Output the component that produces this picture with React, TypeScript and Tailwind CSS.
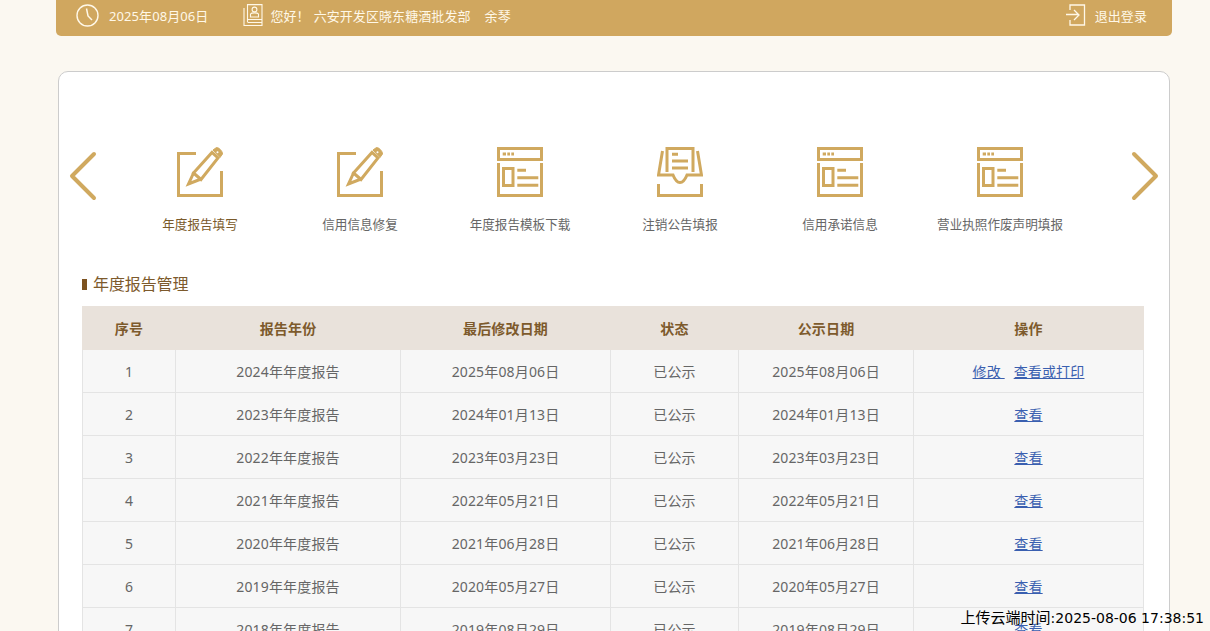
const FONT = "font-['Noto_Sans','Noto_Sans_CJK_SC',sans-serif]";

const EditIcon = () => (
  <svg width="46" height="50" viewBox="0 0 46 50" fill="none" stroke="#d0a95f" strokeWidth="3">
    <path d="M19 6.500H1.500V48.500H44.500V24" />
    <path d="M16.500 26L35 5.500L41 11L24 32.500Z" />
    <path d="M17 25L11.500 37L24 32" />
    <path d="M36 3L39.500 0.500C42 0.500 45.500 4 45.500 7L43 10.500Z" fill="#d0a95f" strokeWidth="1" />
    <circle cx="40.500" cy="5.200" r="1" fill="#ffffff" stroke="none" />
  </svg>
);

const NewsIcon = () => (
  <svg width="46" height="50" viewBox="0 0 46 50" fill="none" stroke="#d0a95f" strokeWidth="3">
    <rect x="1.500" y="1.500" width="43" height="11" />
    <path d="M1.500 16V48.500H44.500V16" />
    <path d="M5.700 6.900H9M10.300 6.900H13M14.300 6.900H17" />
    <rect x="6.500" y="21.500" width="9.500" height="17" />
    <path d="M20.300 23.300H29M20.300 30.700H41.300M20.300 38.300H41.300" />
  </svg>
);

const TrayIcon = () => (
  <svg width="46" height="50" viewBox="0 0 46 50" fill="none" stroke="#d0a95f" strokeWidth="3">
    <path d="M10 25V1.500H36V25" />
    <path d="M15 7.300H21M15 14H31M15 21H31" />
    <path d="M5.500 4L1.500 28H16C18 33 20 35.500 23 35.500C26 35.500 28 33 30 28H44.500L40.500 4" />
    <path d="M1.500 37V48.500H44.500V37" />
  </svg>
);

const ClockIcon = () => (
  <svg width="23" height="23" viewBox="0 0 23 23" fill="none" stroke="#fff8e8" strokeWidth="1.400">
    <circle cx="11.500" cy="11.500" r="10.500" />
    <path d="M10.500 4.500L12 12L16 16" strokeWidth="1.500" />
  </svg>
);

const ContactIcon = () => (
  <svg width="20" height="22" viewBox="0 0 20 22" fill="none" stroke="#fff8e8" strokeWidth="1.100">
    <path d="M4.500 18V0.600H19V18" />
    <path d="M1 4V21.500H19V18" />
    <circle cx="11.500" cy="5.500" r="2.400" />
    <path d="M7.500 13V10C8.500 8.500 14.500 8.500 15.500 10V13Z" />
    <path d="M4.500 15.500H19M4.500 18.500H19" />
  </svg>
);

const LogoutIcon = () => (
  <svg width="20" height="22" viewBox="0 0 20 22" fill="none" stroke="#fff8e8" strokeWidth="1.300">
    <path d="M4 6V1H18.500V21H4V16" />
    <path d="M0 10.500H12M8 6L13 11L8 16" />
  </svg>
);

const items = [
  { label: "年度报告填写", icon: <EditIcon />, color: "text-[#7a5a2a]" },
  { label: "信用信息修复", icon: <EditIcon />, color: "text-[#666666]" },
  { label: "年度报告模板下载", icon: <NewsIcon />, color: "text-[#666666]" },
  { label: "注销公告填报", icon: <TrayIcon />, color: "text-[#666666]" },
  { label: "信用承诺信息", icon: <NewsIcon />, color: "text-[#666666]" },
  { label: "营业执照作废声明填报", icon: <NewsIcon />, color: "text-[#666666]" },
];

const rows = [
  ["1", "2024年年度报告", "2025年08月06日", "2025年08月06日"],
  ["2", "2023年年度报告", "2024年01月13日", "2024年01月13日"],
  ["3", "2022年年度报告", "2023年03月23日", "2023年03月23日"],
  ["4", "2021年年度报告", "2022年05月21日", "2022年05月21日"],
  ["5", "2020年年度报告", "2021年06月28日", "2021年06月28日"],
  ["6", "2019年年度报告", "2020年05月27日", "2020年05月27日"],
  ["7", "2018年年度报告", "2019年08月29日", "2019年08月29日"],
];

const headers = ["序号", "报告年份", "最后修改日期", "状态", "公示日期", "操作"];

const App = () => {
  return (
    <div className={`relative h-[631px] overflow-hidden bg-[#fbf8f1] ${FONT}`}>
      <div className="ml-[56px] mr-[38px] flex h-[36px] items-center justify-between rounded-b-[5px] bg-[#d0a75f] pl-[20px] pr-[25px] text-[13px] tracking-[0.08px] text-[#fff8e8]">
        <div className="flex items-center">
          <span className="mb-[6px]"><ClockIcon /></span>
          <span className="mb-[2px] ml-[10px]">2025年08月06日</span>
          <span className="mb-[6px] ml-[35px]"><ContactIcon /></span>
          <span className="mb-[2px] ml-[7px]">您好！</span>
          <span className="mb-[2px] ml-[4px]">六安开发区晓东糖酒批发部</span>
          <span className="mb-[2px] ml-[14px]">余琴</span>
        </div>
        <div className="flex items-center">
          <span className="mb-[6px]"><LogoutIcon /></span>
          <span className="mb-[2px] ml-[9px]">退出登录</span>
        </div>
      </div>

      <div className="ml-[58px] mr-[40px] mt-[35px] h-[700px] rounded-[10px] border border-[#cccccc] bg-white px-[23px]">
        <div className="mt-[75px] flex items-start">
          <svg className="-ml-[13px] mt-[4px]" width="28" height="50" viewBox="0 0 28 50" fill="none" stroke="#d0a95f" strokeWidth="4" strokeLinecap="round" strokeLinejoin="round">
            <path d="M25 3L3 25L25 47" />
          </svg>
          <div className="ml-[23px] flex">
            {items.map((item) => (
              <div key={item.label} className="flex w-[160px] flex-col items-center">
                {item.icon}
                <p className={`mt-[18px] text-[12.6px] leading-[20px] ${item.color}`}>{item.label}</p>
              </div>
            ))}
          </div>
          <svg className="-mr-[13px] ml-auto mt-[4px]" width="28" height="50" viewBox="0 0 28 50" fill="none" stroke="#d0a95f" strokeWidth="4" strokeLinecap="round" strokeLinejoin="round">
            <path d="M3 3L25 25L3 47" />
          </svg>
        </div>

        <div className="mt-[37px] flex h-[24px] items-center">
          <span className="h-[11px] w-[5px] bg-[#7d5320]" />
          <span className="ml-[6px] text-[16px] tracking-[-0.1px] text-[#7d5a2c]">年度报告管理</span>
        </div>

        <table className="mt-[10px] w-[1061px] table-fixed border-collapse text-center text-[14px] tracking-[0.15px]">
          <colgroup>
            <col className="w-[93px]" />
            <col className="w-[225px]" />
            <col className="w-[210px]" />
            <col className="w-[128px]" />
            <col className="w-[175px]" />
            <col className="w-[230px]" />
          </colgroup>
          <thead>
            <tr className="h-[43px] bg-[#e9e2db]">
              {headers.map((h) => (
                <th key={h} className="border border-[#e9e2db] font-bold text-[#7d5a2c]">{h}</th>
              ))}
            </tr>
          </thead>
          <tbody>
            {rows.map((row, i) => (
              <tr key={row[0]} className="h-[43px] bg-[#f7f7f7] text-[#666666]">
                <td className="border border-[#e4e4e4]">{row[0]}</td>
                <td className="border border-[#e4e4e4]">{row[1]}</td>
                <td className="border border-[#e4e4e4]">{row[2]}</td>
                <td className="border border-[#e4e4e4]">已公示</td>
                <td className="border border-[#e4e4e4]">{row[3]}</td>
                <td className="border border-[#e4e4e4] text-[#3a5fb0]">
                  {i === 0 ? (
                    <>
                      <a className="underline" href="#">修改&nbsp;</a>
                      <a className="ml-[9px] underline" href="#">查看或打印</a>
                    </>
                  ) : (
                    <a className="underline" href="#">查看</a>
                  )}
                </td>
              </tr>
            ))}
          </tbody>
        </table>
      </div>

      <div className="absolute bottom-[3px] right-[6px] font-['DejaVu_Sans','Noto_Sans_CJK_SC',sans-serif] text-[14px] leading-[20px] text-black">
        <span className="text-[15px]">上传云端时间</span>:2025-08-06 17:38:51
      </div>
    </div>
  );
};

export default App;
